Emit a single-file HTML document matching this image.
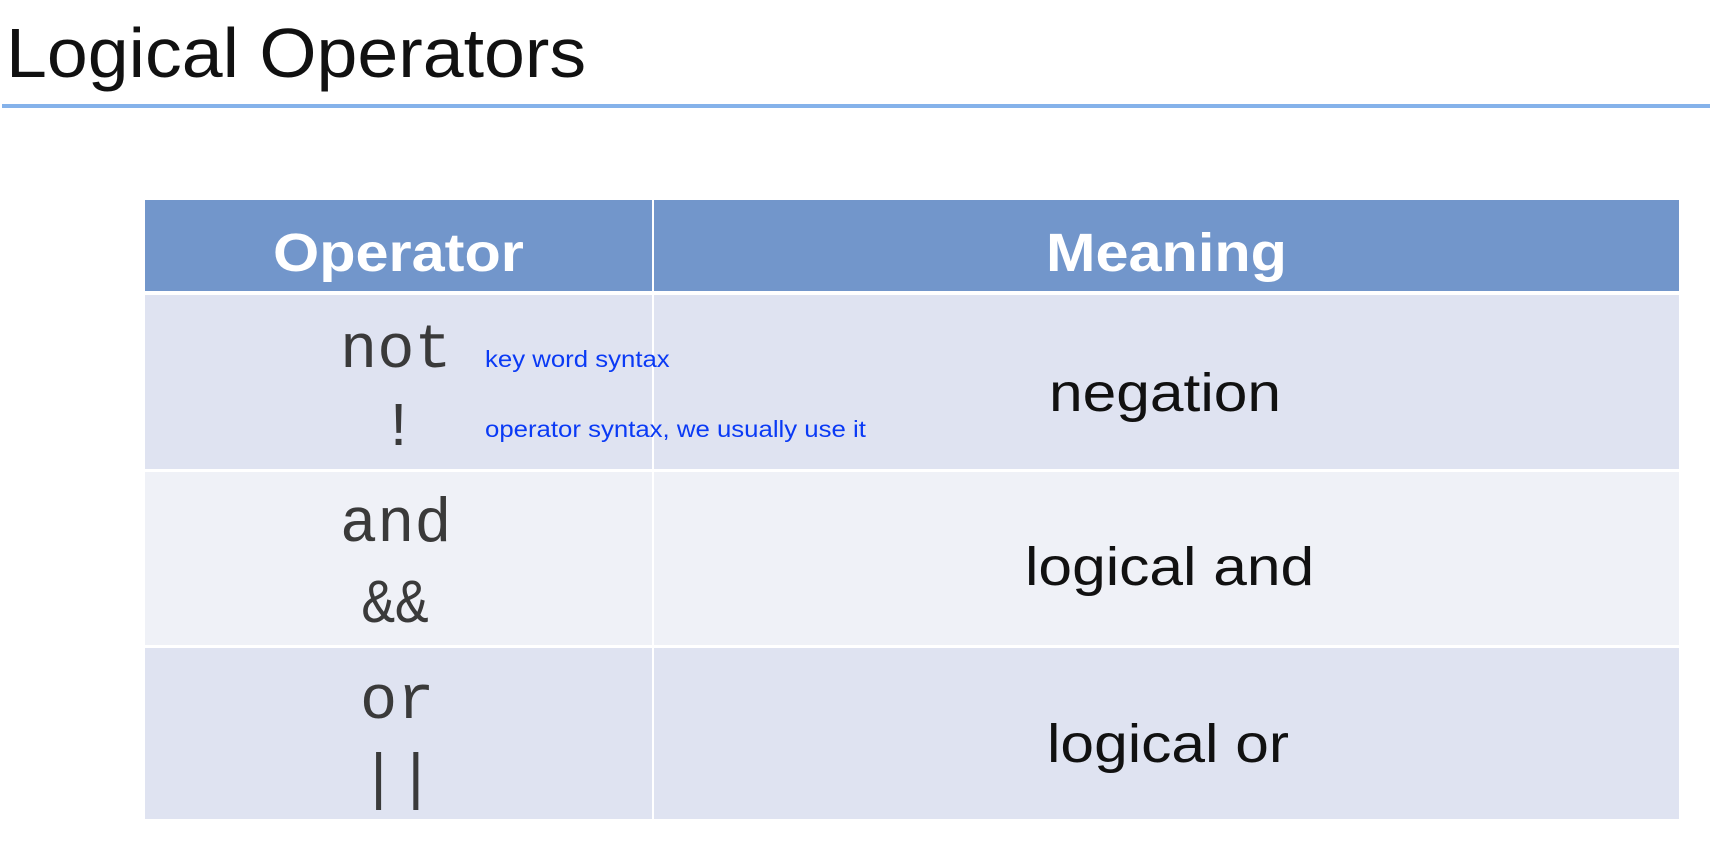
<!DOCTYPE html>
<html><head><meta charset="utf-8"><style>
body{margin:0;width:1710px;height:852px;background:#fff;position:relative;overflow:hidden;font-family:"Liberation Sans",sans-serif}
.a{position:absolute;white-space:nowrap;line-height:1;transform-origin:left}
.r{position:absolute;left:145px;width:1534px}
.m{font-family:"Liberation Mono",monospace;color:#3a3a3a;font-size:62px}
.b{color:#0a3af5;font-size:23px;transform:scaleX(1.12)}
.k{color:#111;font-size:54px;transform:scaleX(1.12)}
</style></head><body>
<div class="a" style="left:6px;top:18px;font-size:70px;color:#111;transform:scaleX(1.05)">Logical Operators</div>
<div style="position:absolute;left:2px;top:104px;width:1708px;height:4px;background:#85b2ea"></div>
<div class="r" style="top:200px;height:91px;background:#7296cb"></div>
<div class="r" style="top:295px;height:174px;background:#dfe3f1"></div>
<div class="r" style="top:472px;height:173px;background:#eff1f7"></div>
<div class="r" style="top:648px;height:171px;background:#dfe3f1"></div>
<div style="position:absolute;left:652px;top:200px;width:2px;height:619px;background:#fff"></div>
<div class="a" style="left:273px;top:226px;font-size:54px;font-weight:bold;color:#fff;transform:scaleX(1.1)">Operator</div>
<div class="a" style="left:1046px;top:226px;font-size:54px;font-weight:bold;color:#fff;transform:scaleX(1.1)">Meaning</div>
<div class="a m" style="left:340px;top:320px">not</div>
<div class="a m" style="left:380px;top:398px">!</div>
<div class="a m" style="left:340px;top:494px">and</div>
<div class="a m" style="left:362px;top:575px;transform:scaleX(0.9)">&amp;&amp;</div>
<div class="a m" style="left:360px;top:671px">or</div>
<div class="a m" style="left:360px;top:750px">||</div>
<div class="a b" style="left:485px;top:348px">key word syntax</div>
<div class="a b" style="left:485px;top:418px">operator syntax, we usually use it</div>
<div class="a k" style="left:1049px;top:366px">negation</div>
<div class="a k" style="left:1025px;top:540px">logical and</div>
<div class="a k" style="left:1047px;top:717px">logical or</div>
</body></html>
